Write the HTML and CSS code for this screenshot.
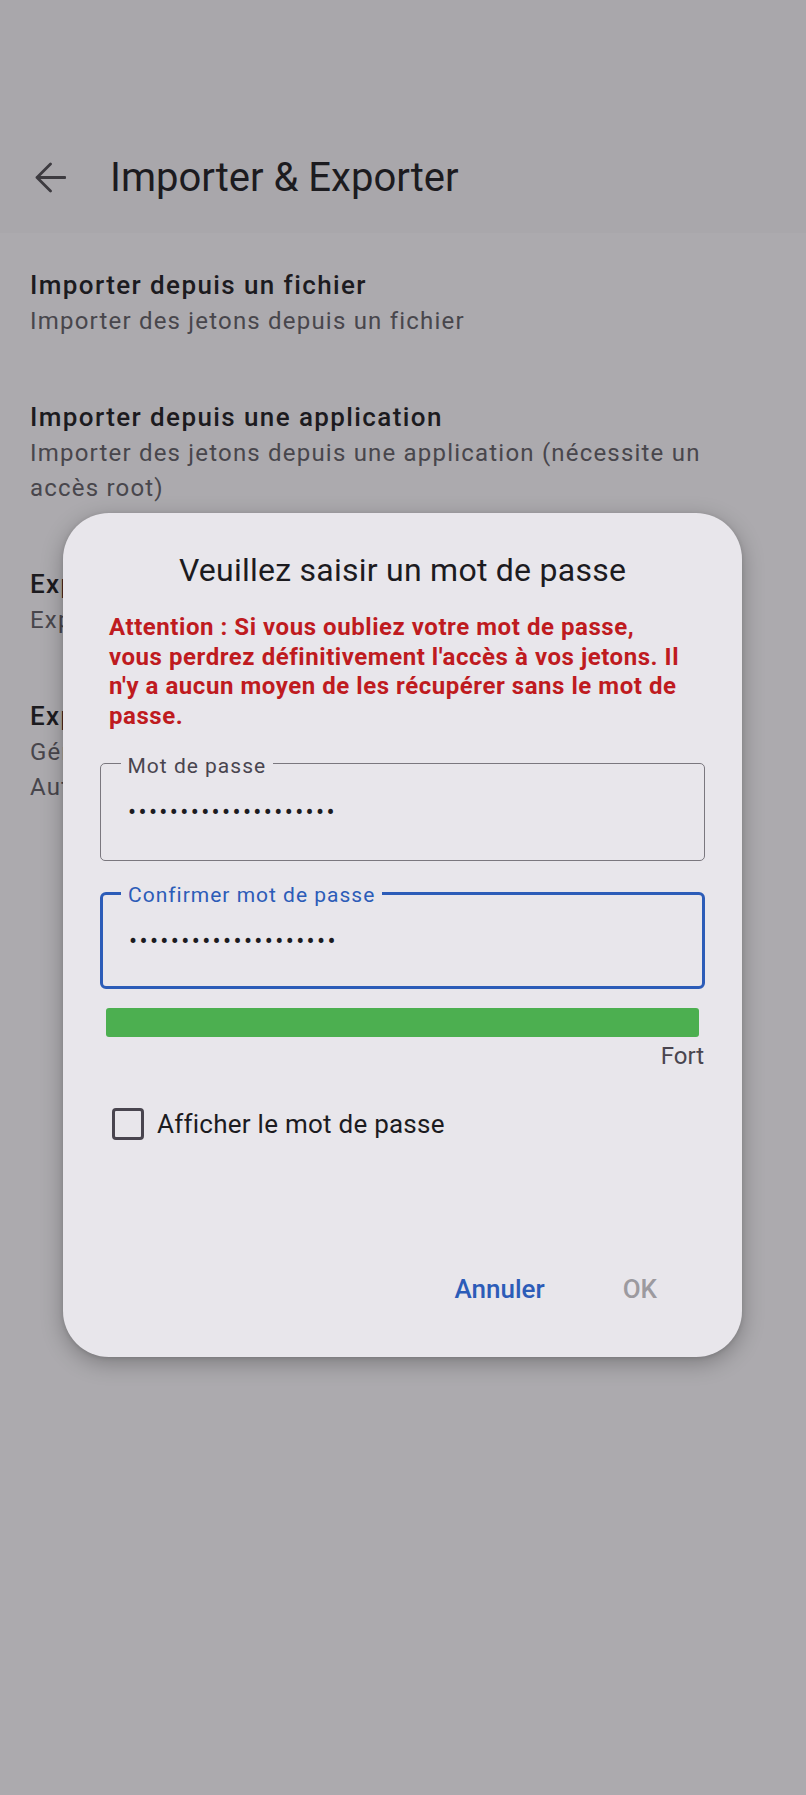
FILE: index.html
```html
<!DOCTYPE html>
<html lang="fr">
<head>
<meta charset="utf-8">
<title>Importer &amp; Exporter</title>
<link rel="stylesheet" href="styles.css">
</head>
<body>
<div class="screen">
  <header class="appbar">
    <div class="toolbar">
      <svg class="back" width="31" height="31" viewBox="0 0 31 31" aria-hidden="true">
        <path d="M2 15.5 H30 M15.5 2 L2 15.5 L15.5 29" fill="none" stroke="#3d3b40" stroke-width="2.8" stroke-linejoin="round" stroke-linecap="round"/>
      </svg>
      <h1 class="title">Importer &amp; Exporter</h1>
    </div>
  </header>

  <main class="list">
    <div class="item">
      <div class="item-title">Importer depuis un fichier</div>
      <div class="item-sub">Importer des jetons depuis un fichier</div>
    </div>
    <div class="item">
      <div class="item-title">Importer depuis une application</div>
      <div class="item-sub">Importer des jetons depuis une application (nécessite un accès root)</div>
    </div>
    <div class="item">
      <div class="item-title">Exporter vers un fichier</div>
      <div class="item-sub">Exporter des jetons vers un fichier</div>
    </div>
    <div class="item">
      <div class="item-title">Exporter automatiquement</div>
      <div class="item-sub">Générer une sauvegarde chiffrée<br>Automatiquement, à chaque modification</div>
    </div>
  </main>

  <div class="dialog" role="dialog">
    <h2 class="dlg-title">Veuillez saisir un mot de passe</h2>
    <p class="warning">Attention : Si vous oubliez votre mot de passe, vous perdrez définitivement l'accès à vos jetons. Il n'y a aucun moyen de les récupérer sans le mot de passe.</p>

    <div class="field">
      <span class="field-label">Mot de passe</span>
      <span class="dots">••••••••••••••••••••</span>
    </div>
    <div class="field field-focused">
      <span class="field-label">Confirmer mot de passe</span>
      <span class="dots">••••••••••••••••••••</span>
    </div>

    <div class="strength"><div class="strength-fill"></div></div>
    <div class="strength-text">Fort</div>

    <label class="check-row">
      <span class="checkbox"></span>
      <span class="check-label">Afficher le mot de passe</span>
    </label>

    <div class="actions">
      <span class="btn btn-cancel">Annuler</span>
      <span class="btn btn-ok">OK</span>
    </div>
  </div>
</div>
</body>
</html>
```
FILE: styles.css
```css
* { box-sizing: border-box; }

html, body {
  margin: 0;
  padding: 0;
}

body {
  width: 806px;
  height: 1795px;
  background: #acaaae;
  font-family: Roboto, "Noto Sans", "Liberation Sans", sans-serif;
  color: #1c1b1f;
  overflow: hidden;
}

.screen {
  position: relative;
  width: 806px;
  height: 1795px;
}

.appbar {
  background: #a9a7ab;
  padding-top: 121px;
}

.toolbar {
  height: 112px;
  display: flex;
  align-items: center;
  padding-left: 35px;
}

.back {
  display: block;
  flex: none;
}

.title {
  margin: 3px 0 0 44px;
  font-size: 40px;
  font-weight: 400;
  line-height: 1.172;
  color: #1c1b1f;
}

.list {
  padding-top: 4px;
}

.item {
  padding: 30px 70px 30px 30px;
}

.item-title {
  font-size: 26px;
  font-weight: 500;
  line-height: 36px;
  letter-spacing: 1.4px;
  color: #1c1b1f;
}

.item-sub {
  margin-top: 1px;
  font-size: 24px;
  line-height: 35px;
  letter-spacing: 1.2px;
  color: #48464c;
}

/* dialog */
.dialog {
  position: absolute;
  left: 63px;
  top: 513px;
  width: 679px;
  height: 844px;
  background: #e8e6eb;
  border-radius: 46px;
  box-shadow: 0 6px 22px rgba(0, 0, 0, 0.28), 0 1px 4px rgba(0, 0, 0, 0.12);
  padding: 37px 37px 48px;
  display: flex;
  flex-direction: column;
}

.dlg-title {
  margin: 0;
  text-align: center;
  font-size: 32px;
  font-weight: 400;
  line-height: 40px;
  letter-spacing: 0.25px;
  color: #1c1b1f;
}

.warning {
  margin: 23px 0 0;
  padding: 0 16px 0 9px;
  font-size: 24px;
  font-weight: 700;
  line-height: 29.5px;
  letter-spacing: 0.55px;
  color: #bf1b1f;
}

.field {
  position: relative;
  height: 98px;
  margin-top: 32px;
  border: 1.5px solid #7a777e;
  border-radius: 5px;
  display: flex;
  align-items: center;
  padding-left: 27px;
}

.field-focused {
  height: 97px;
  margin-top: 31px;
  border: 3px solid #2c5cb8;
  border-radius: 6px;
  padding-left: 26px;
}

.field-label {
  position: absolute;
  left: 19.5px;
  top: -10.5px;
  padding: 0 7px;
  background: #e8e6eb;
  font-size: 21px;
  line-height: 24px;
  letter-spacing: 1px;
  color: #49454f;
}

.field-focused .field-label {
  left: 18px;
  top: -12.5px;
  color: #2c5cb8;
}

.dots {
  font-size: 24px;
  line-height: 1;
  letter-spacing: 2.35px;
  color: #1c1b1f;
}

.strength {
  margin: 19px 6px 0;
  height: 29px;
  background: #dcdade;
  border-radius: 3px;
  overflow: hidden;
}

.strength-fill {
  width: 100%;
  height: 100%;
  background: #4caf50;
}

.strength-text {
  margin-top: 4px;
  padding-right: 1px;
  text-align: right;
  font-size: 24px;
  line-height: 30px;
  color: #49454f;
}

.check-row {
  margin-top: 29px;
  height: 48px;
  display: flex;
  align-items: center;
  padding-left: 12px;
}

.checkbox {
  width: 32px;
  height: 32px;
  border: 3px solid #49454f;
  border-radius: 4px;
  flex: none;
}

.check-label {
  margin-left: 13px;
  font-size: 26px;
  line-height: 36px;
  letter-spacing: 0.25px;
  color: #1c1b1f;
}

.actions {
  margin-top: auto;
  display: flex;
  justify-content: flex-end;
  gap: 78px;
  padding-right: 48px;
}

.btn {
  font-size: 26px;
  font-weight: 500;
  line-height: 40px;
}

.btn-cancel { color: #2c5cb8; }
.btn-ok { color: #9c9a9f; }
```
